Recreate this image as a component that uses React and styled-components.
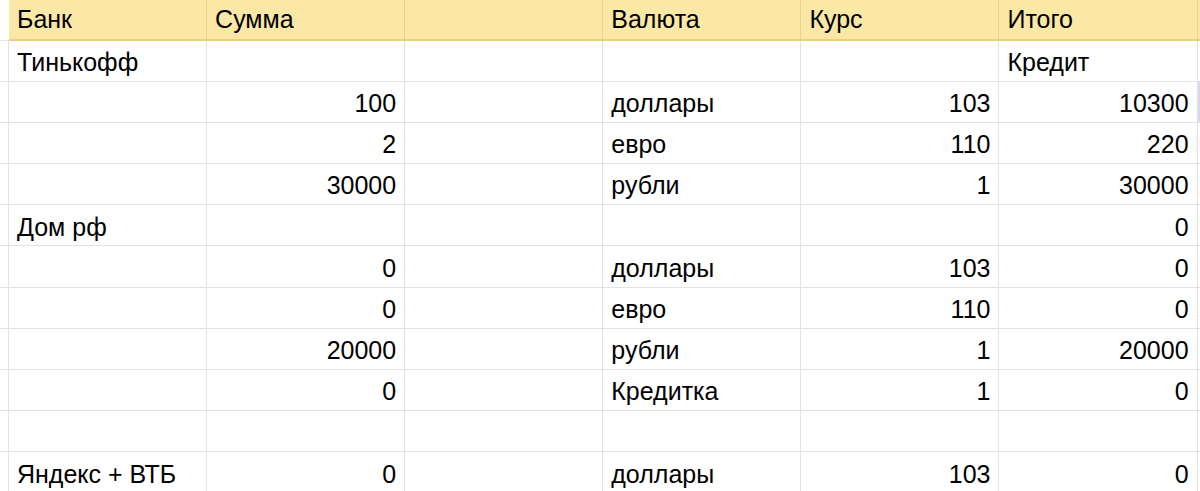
import React from 'react';
import styled, { createGlobalStyle } from 'styled-components';

const GlobalStyle = createGlobalStyle`
  html, body {
    margin: 0;
    padding: 0;
    background: #ffffff;
    overflow: hidden;
  }
  * { box-sizing: border-box; }
`;

const GRID = '#e2e2e2';

// Sheet grid
const Sheet = styled.div`
  display: grid;
  grid-template-columns: 9px repeat(6, 198.1px) 1fr;
  grid-auto-rows: 41.2px;
  grid-template-rows: 40.5px;
  width: 1200px;
  height: 491px;
  overflow: hidden;
  font-family: "Liberation Sans", Arial, Helvetica, sans-serif;
  font-size: 25px;
  color: #000;
`;

const Cell = styled.div`
  border-right: 1px solid ${props => (props.edge ? 'transparent' : GRID)};
  border-bottom: 1px solid ${GRID};
  padding: 9.4px 8px 0;
  line-height: 25px;
  white-space: nowrap;
  overflow: hidden;
  text-align: ${props => (props.num ? 'right' : 'left')};
  background: ${props => (props.selected ? '#d9d6ee' : '#fff')};
`;

const HeadCell = styled(Cell)`
  background: #fce8a6;
  border-right-color: #ead28a;
  border-bottom: 2px solid #e8cf85;
  padding-top: 6.6px;
`;

const Gutter = styled.div`
  border-right: 1px solid ${GRID};
  border-bottom: 1px solid ${GRID};
  background: #fff;
`;

const HeadGutter = styled(Gutter)`
  border-right: none;
`;

const HEADERS = ['Банк', 'Сумма', '', 'Валюта', 'Курс', 'Итого'];

// each row: [bank, sum, empty, currency, rate, total]
const ROWS = [
  ['Тинькофф', '', '', '', '', 'Кредит'],
  ['', '100', '', 'доллары', '103', '10300'],
  ['', '2', '', 'евро', '110', '220'],
  ['', '30000', '', 'рубли', '1', '30000'],
  ['Дом рф', '', '', '', '', '0'],
  ['', '0', '', 'доллары', '103', '0'],
  ['', '0', '', 'евро', '110', '0'],
  ['', '20000', '', 'рубли', '1', '20000'],
  ['', '0', '', 'Кредитка', '1', '0'],
  ['', '', '', '', '', ''],
  ['Яндекс + ВТБ', '0', '', 'доллары', '103', '0'],
];

const isNum = v => /^\d+$/.test(v);

const App = () => (
  <>
    <GlobalStyle />
    <Sheet>
      <HeadGutter />
      {HEADERS.map((h, i) => (
        <HeadCell key={i}>{h}</HeadCell>
      ))}
      <HeadCell edge />

      {ROWS.map((row, r) => (
        <React.Fragment key={r}>
          <Gutter />
          {row.map((v, c) => (
            <Cell key={c} num={isNum(v)}>{v}</Cell>
          ))}
          <Cell edge selected={r === 1} />
        </React.Fragment>
      ))}
    </Sheet>
  </>
);

export default App;
